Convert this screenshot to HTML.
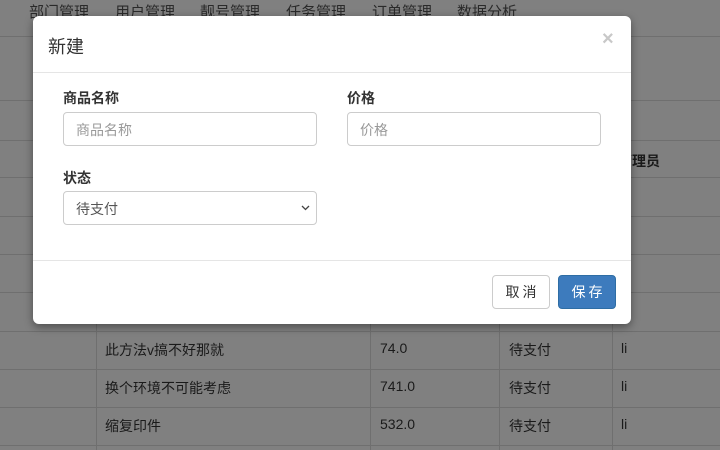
<!DOCTYPE html>
<html><head><meta charset="utf-8"><style>
*{box-sizing:border-box;margin:0;padding:0}
body{width:720px;height:450px;overflow:hidden;position:relative;background:#808080;font-family:"Liberation Sans","Noto Sans CJK SC",sans-serif;font-size:14px;color:#1a1a1a}
.abs{position:absolute}
.hl{position:absolute;left:0;width:720px;height:1px;background:#6f6f6f}
.vl{position:absolute;width:1px;background:#6f6f6f}
.nav span{position:absolute;top:1px;font-size:15px;color:#2a2a2a}
.cell{position:absolute;font-size:14px;color:#1a1a1a}
.modal{position:absolute;left:33px;top:16px;width:598px;height:308px;background:#fff;border-radius:6px;box-shadow:0 3px 9px rgba(0,0,0,.4)}
.lbl{position:absolute;font-weight:bold;font-size:14px;color:#333}
.inp{position:absolute;border:1px solid #ccc;border-radius:4px;height:34px;padding:7px 12px;font-size:14px;color:#999}
.btn{position:absolute;top:259px;height:34px;width:58px;border-radius:4px;font-size:14px;text-align:center;line-height:32px;letter-spacing:3px;text-indent:3px}
</style></head><body>
<div class="nav">
<span style="left:29px">部门管理</span><span style="left:115px">用户管理</span><span style="left:200px">靓号管理</span><span style="left:286px">任务管理</span><span style="left:372px">订单管理</span><span style="left:457px">数据分析</span>
</div>
<div class="hl" style="top:36px"></div>
<div class="hl" style="top:100px"></div>
<div class="hl" style="top:140px"></div>
<div class="hl" style="top:177px"></div>
<div class="hl" style="top:216px"></div>
<div class="hl" style="top:254px"></div>
<div class="hl" style="top:292px"></div>
<div class="hl" style="top:331px"></div>
<div class="hl" style="top:369px"></div>
<div class="hl" style="top:407px"></div>
<div class="hl" style="top:445px"></div>
<div class="vl" style="left:96px;top:140px;height:310px"></div>
<div class="vl" style="left:370px;top:140px;height:310px"></div>
<div class="vl" style="left:499px;top:140px;height:310px"></div>
<div class="vl" style="left:612px;top:140px;height:310px"></div>
<div class="cell" style="left:618px;top:151px;font-weight:bold">管理员</div>
<div class="cell" style="left:105px;top:340px">此方法v搞不好那就</div>
<div class="cell" style="left:380px;top:340px">74.0</div>
<div class="cell" style="left:509px;top:340px">待支付</div>
<div class="cell" style="left:621px;top:340px">li</div>
<div class="cell" style="left:105px;top:378px">换个环境不可能考虑</div>
<div class="cell" style="left:380px;top:378px">741.0</div>
<div class="cell" style="left:509px;top:378px">待支付</div>
<div class="cell" style="left:621px;top:378px">li</div>
<div class="cell" style="left:105px;top:416px">缩复印件</div>
<div class="cell" style="left:380px;top:416px">532.0</div>
<div class="cell" style="left:509px;top:416px">待支付</div>
<div class="cell" style="left:621px;top:416px">li</div>

<div class="modal">
<div class="abs" style="left:15px;top:17px;font-size:18px;color:#333">新建</div>
<div class="abs" style="left:569px;top:12px;font-size:20px;font-weight:bold;color:#c8c8c8">×</div>
<div class="abs" style="left:0;top:56px;width:598px;height:1px;background:#e5e5e5"></div>
<div class="lbl" style="left:30px;top:72px">商品名称</div>
<div class="lbl" style="left:314px;top:72px">价格</div>
<div class="inp" style="left:30px;top:96px;width:254px">商品名称</div>
<div class="inp" style="left:314px;top:96px;width:254px">价格</div>
<div class="lbl" style="left:30px;top:152px">状态</div>
<div class="inp" style="left:30px;top:175px;width:254px;color:#555">待支付
<svg class="abs" style="right:6px;top:13px" width="9" height="6" viewBox="0 0 9 6"><path d="M1 1l3.5 3.5L8 1" stroke="#444" stroke-width="1.3" fill="none"/></svg></div>
<div class="abs" style="left:0;top:244px;width:598px;height:1px;background:#e5e5e5"></div>
<div class="btn" style="left:459px;border:1px solid #ccc;color:#333;background:#fff">取消</div>
<div class="btn" style="left:525px;background:#3d7bbd;border:1px solid #2e6da4;color:#fff">保存</div>
</div>
</body></html>
